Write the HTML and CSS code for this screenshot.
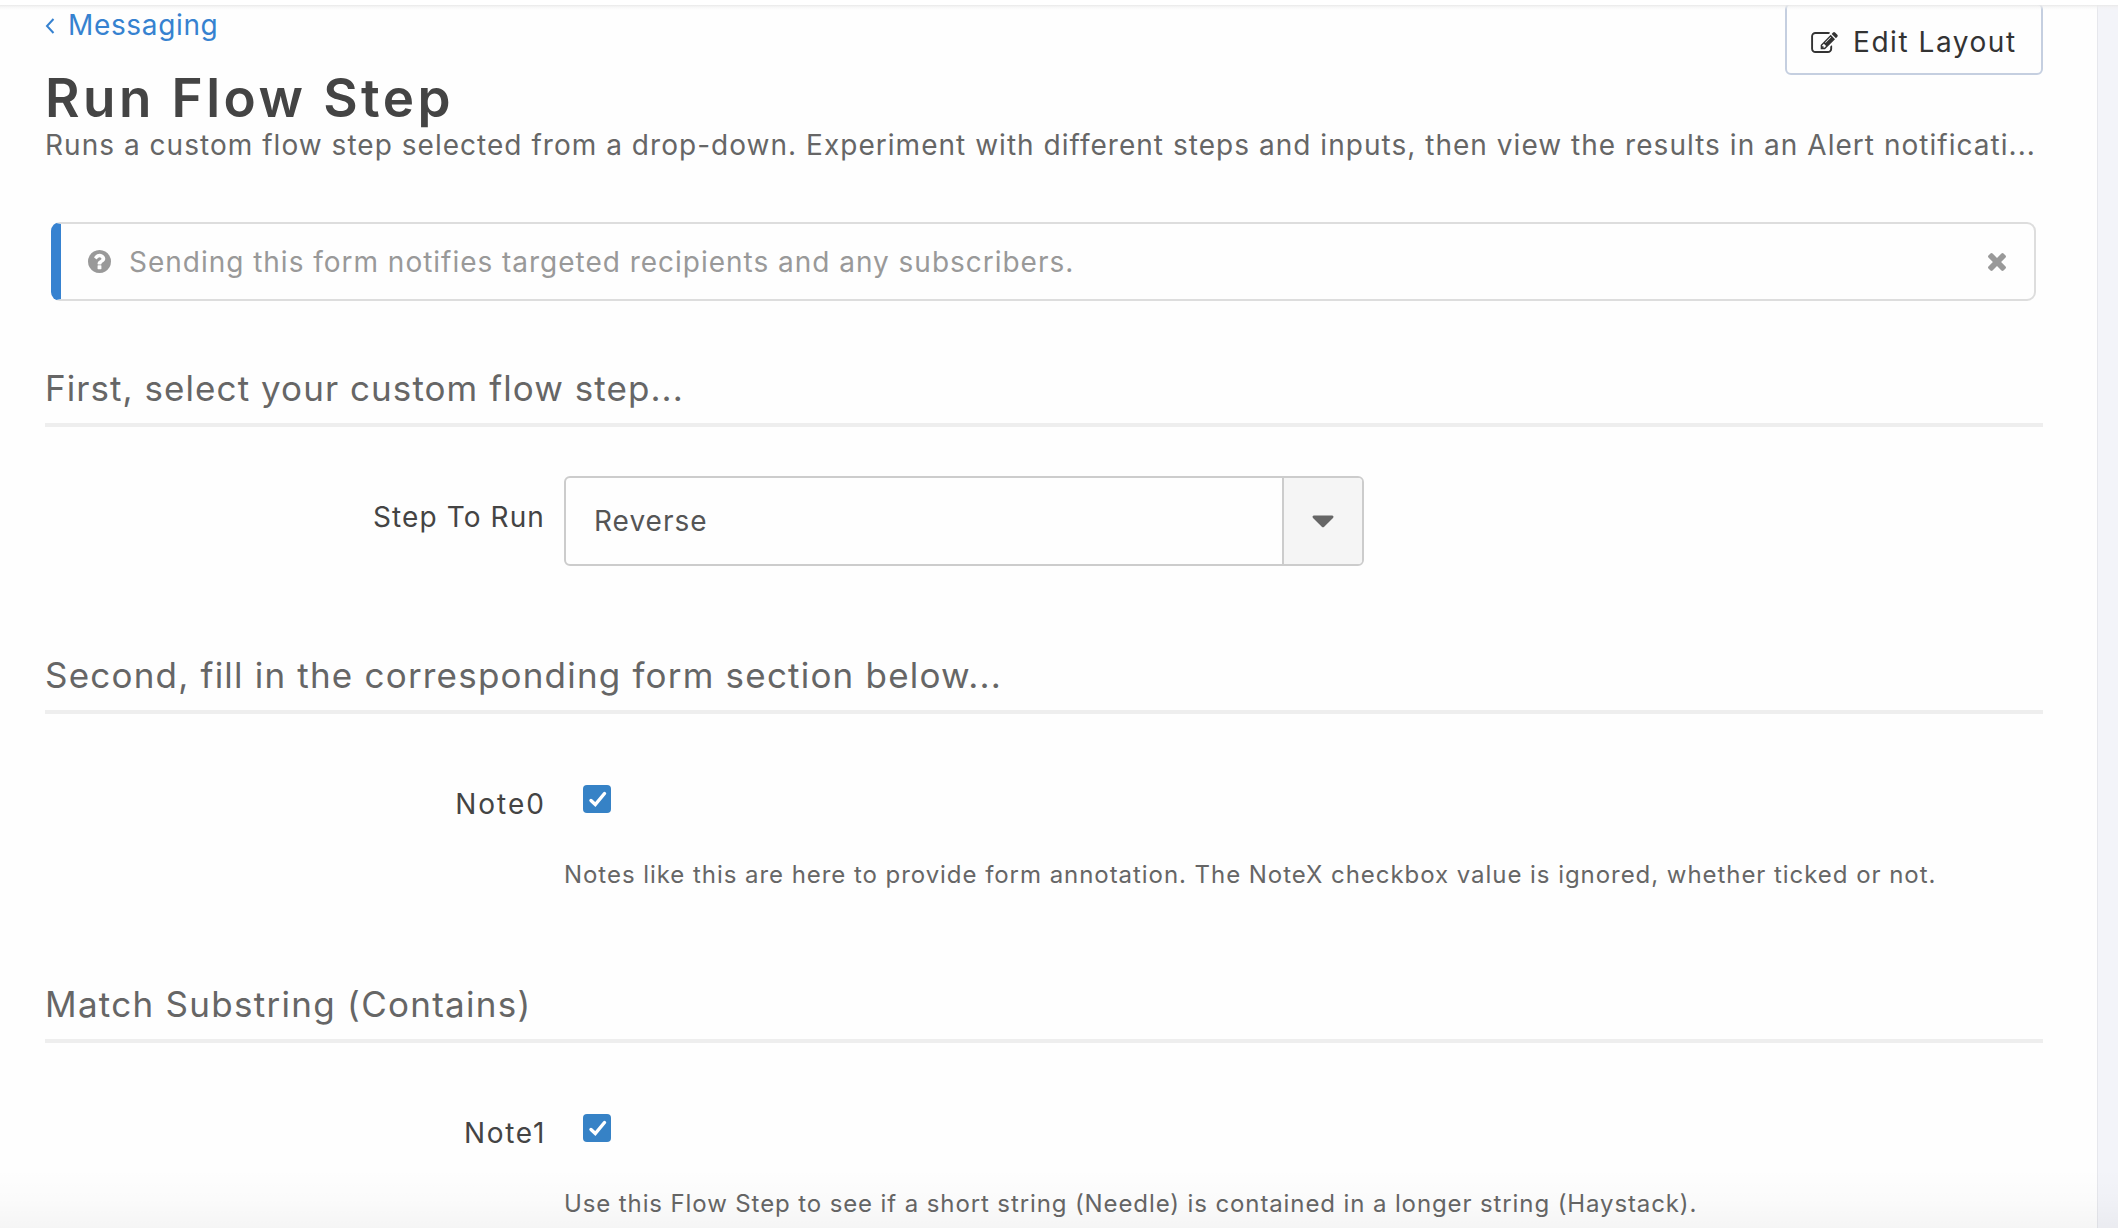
FILE: index.html
```html
<!DOCTYPE html>
<html lang="en">
<head>
<meta charset="utf-8">
<title>Run Flow Step</title>
<link rel="stylesheet" href="styles.css">
</head>
<body>
<div class="page">
  <main class="panel">
    <header class="header">
      <div class="heading">
        <a class="crumb" href="#">
          <svg class="crumb-icon" viewBox="0 0 10 20"><path d="M8.500 3 2 10l6.500 7" fill="none" stroke="currentColor" stroke-width="2"/></svg>
          <span>Messaging</span>
        </a>
        <h1 class="title">Run Flow Step</h1>
      </div>
      <button class="edit-button" type="button">
        <svg class="edit-icon" viewBox="0 128 1792 1408"><path fill="currentColor" d="M888 1184l116-116-152-152-116 116v56h96v96h56zm440-720q-16-16-33 1l-350 350q-17 17-1 33t33-1l350-350q17-17 1-33zm80 594v190q0 119-84.5 203.5t-203.5 84.500h-832q-119 0-203.5-84.500t-84.500-203.500v-832q0-119 84.500-203.500t203.500-84.500h832q63 0 117 25 15 7 18 23 3 17-9 29l-49 49q-14 14-32 8-23-6-45-6h-832q-66 0-113 47t-47 113v832q0 66 47 113t113 47h832q66 0 113-47t47-113v-126q0-13 9-22l64-64q15-15 35-7t20 29zm-96-738l288 288-672 672h-288v-288zm444 132l-92 92-288-288 92-92q28-28 68-28t68 28l152 152q28 28 28 68t-28 68z"/></svg>
        <span>Edit Layout</span>
      </button>
    </header>
    <p class="description">Runs a custom flow step selected from a drop-down. Experiment with different steps and inputs, then view the results in an Alert notificati...</p>

    <div class="notice">
      <svg class="notice-icon" viewBox="128 128 1536 1536"><path fill="currentColor" d="M1024 1376v-192q0-14-9-23t-23-9h-192q-14 0-23 9t-9 23v192q0 14 9 23t23 9h192q14 0 23-9t9-23zm256-672q0-88-55.500-163t-138.500-116-170-41q-243 0-371 213-15 24 8 42l132 100q7 6 19 6 16 0 25-12 53-68 86-92 34-24 86-24 48 0 85.500 26t37.500 59q0 38-20 61t-68 45q-63 28-115.500 86.500t-52.500 125.500v36q0 14 9 23t23 9h192q14 0 23-9t9-23q0-19 21.500-49.500t54.500-49.500q32-18 49-28.500t46-35 44.500-48 28-60.500 12.500-81zm384 192q0 209-103 385.500t-279.500 279.500-385.500 103-385.500-103-279.500-279.500-103-385.500 103-385.500 279.500-279.500 385.500-103 385.500 103 279.500 279.500 103 385.500z"/></svg>
      <span class="notice-text">Sending this form notifies targeted recipients and any subscribers.</span>
      <svg class="notice-close" viewBox="302 366 1188 1188"><path fill="currentColor" d="M1490 1322q0 40-28 68l-136 136q-28 28-68 28t-68-28l-294-294-294 294q-28 28-68 28t-68-28l-136-136q-28-28-28-68t28-68l294-294-294-294q-28-28-28-68t28-68l136-136q28-28 68-28t68 28l294 294 294-294q28-28 68-28t68 28l136 136q28 28 28 68t-28 68l-294 294 294 294q28 28 28 68z"/></svg>
    </div>

    <section class="section section-step">
      <h2 class="section-title step-title">First, select your custom flow step...</h2>
      <div class="field field-select">
        <label class="label label-select">Step To Run</label>
        <div class="select">
          <span class="select-value">Reverse</span>
          <span class="select-toggle">
            <svg class="caret" viewBox="0 0 22 13"><path fill="currentColor" d="M1.800.5h18.400q1.300.2 1.300 1.300 0 .6-.5 1.100l-8.800 8.800q-1.200 1-2.400 0L1 2.900Q.5 2.400.5 1.800.5.700 1.800.5z"/></svg>
          </span>
        </div>
      </div>
    </section>

    <section class="section section-fill">
      <h2 class="section-title">Second, fill in the corresponding form section below...</h2>
      <div class="field field-check">
        <label class="label label-note">Note0</label>
        <div class="control">
          <span class="checkbox"><svg class="check" viewBox="0 0 28 28"><path d="M8 15.500 12.300 19.500 21.500 8.500" fill="none" stroke="#fff" stroke-width="3.400" stroke-linecap="round"/></svg></span>
          <p class="help">Notes like this are here to provide form annotation. The NoteX checkbox value is ignored, whether ticked or not.</p>
        </div>
      </div>
    </section>

    <section class="section section-match">
      <h2 class="section-title match-title">Match Substring (Contains)</h2>
      <div class="field field-check">
        <label class="label label-note label-one">Note1</label>
        <div class="control">
          <span class="checkbox"><svg class="check" viewBox="0 0 28 28"><path d="M8 15.500 12.300 19.500 21.500 8.500" fill="none" stroke="#fff" stroke-width="3.400" stroke-linecap="round"/></svg></span>
          <p class="help help-match">Use this Flow Step to see if a short string (Needle) is contained in a longer string (Haystack).</p>
        </div>
      </div>
    </section>
  </main>
  <div class="top-edge"></div>
  <div class="bottom-fade"></div>
</div>
</body>
</html>
```
FILE: styles.css
```css
* {
  box-sizing: border-box;
}

body {
  margin: 0;
  font-family: Inter, "Liberation Sans", sans-serif;
  font-size: 28px;
  line-height: 36px;
  color: #666;
  background: #f3f4f9;
}

h1, h2, p {
  margin: 0;
}

svg {
  display: block;
  flex: none;
}

.page {
  position: relative;
  height: 1228px;
  overflow: hidden;
}

.panel {
  width: 2098px;
  height: 1228px;
  padding: 0 54px 0 45px;
  border-right: 1px solid #e6e7ec;
  background: #fefefe;
}

.header {
  display: flex;
  justify-content: space-between;
  align-items: flex-start;
  height: 127px;
}

.heading {
  padding-top: 7px;
}

.crumb {
  display: flex;
  align-items: center;
  gap: 13px;
  color: #3682d0;
  letter-spacing: 0.65px;
  text-decoration: none;
}

.crumb-icon {
  width: 10px;
  height: 20px;
  margin-top: 2px;
}

.title {
  margin-top: 26px;
  font-size: 53px;
  line-height: 58px;
  font-weight: 600;
  letter-spacing: 3.45px;
  color: #444;
}

.edit-button {
  display: flex;
  align-items: center;
  gap: 15px;
  width: 258px;
  height: 72px;
  margin: 3px 0 0;
  padding: 6px 0 0 24px;
  border: 2px solid #c5cfe0;
  border-radius: 6px;
  background: #fefefe;
  font: inherit;
  letter-spacing: 1.55px;
  color: #333;
  white-space: nowrap;
}

.edit-icon {
  width: 27px;
  height: 21px;
}

.description {
  letter-spacing: 1.03px;
  white-space: nowrap;
}

.notice {
  display: flex;
  align-items: center;
  height: 79px;
  margin: 59px 7px 0 6px;
  padding: 0 28px 0 27px;
  border: 2px solid #ddd;
  border-left: 10px solid #3682d0;
  border-radius: 9px;
  color: #999;
}

.notice-icon {
  width: 23px;
  height: 23px;
}

.notice-text {
  flex: 1;
  margin-left: 18px;
  letter-spacing: 0.98px;
}

.notice-close {
  width: 18px;
  height: 18px;
  margin-top: 1px;
}

.section-step {
  margin-top: 65px;
}

.section-fill {
  margin-top: 87px;
}

.section-match {
  margin-top: 92px;
}

.section-title {
  height: 61px;
  border-bottom: 4px solid #eee;
  font-size: 35px;
  line-height: 44px;
  font-weight: 400;
  letter-spacing: 1.2px;
}

.step-title {
  letter-spacing: 1.06px;
}

.match-title {
  letter-spacing: 1.28px;
}

.field {
  display: flex;
  gap: 19px;
}

.field-select {
  margin-top: 49px;
}

.field-check {
  margin-top: 71px;
}

.label {
  width: 500px;
  text-align: right;
  letter-spacing: 1.1px;
  color: #444;
}

.label-select {
  margin-top: 23px;
}

.label-note {
  padding-top: 1px;
  width: 501px;
  margin-right: -1px;
  letter-spacing: 2px;
}

.label-one {
  letter-spacing: 1.7px;
}

.select {
  display: flex;
  width: 800px;
  height: 90px;
  border: 2px solid #ccc;
  border-radius: 6px;
  overflow: hidden;
}

.select-value {
  flex: 1;
  padding: 25px 0 0 28px;
  letter-spacing: 1px;
  color: #555;
}

.select-toggle {
  display: flex;
  align-items: center;
  justify-content: center;
  width: 80px;
  border-left: 2px solid #ccc;
  background: #f5f5f5;
  color: #666;
}

.caret {
  width: 22px;
  height: 13px;
}

.checkbox {
  display: block;
  width: 28px;
  height: 28px;
  margin-left: 19px;
  border-radius: 4px;
  background: #3682c6;
}

.check {
  width: 28px;
  height: 28px;
}

.help {
  margin-top: 46px;
  font-size: 24px;
  line-height: 32px;
  letter-spacing: 0.95px;
  white-space: nowrap;
}

.help-match {
  letter-spacing: 0.89px;
}

.section-match {
  margin-top: 91px;
}

/* Edges of the scrolled pane, drawn over the form */
.top-edge {
  position: absolute;
  inset: 0 0 auto;
  height: 10px;
  background: linear-gradient(#fff 5px, #e9e9e9 5px, rgba(240, 240, 240, 0.5) 7px, rgba(255, 255, 255, 0) 10px);
}

.bottom-fade {
  position: absolute;
  inset: auto 0 0;
  height: 60px;
  background: linear-gradient(rgba(0, 0, 0, 0), rgba(0, 0, 0, 0.01) 50%, rgba(0, 0, 0, 0.035));
}
```
